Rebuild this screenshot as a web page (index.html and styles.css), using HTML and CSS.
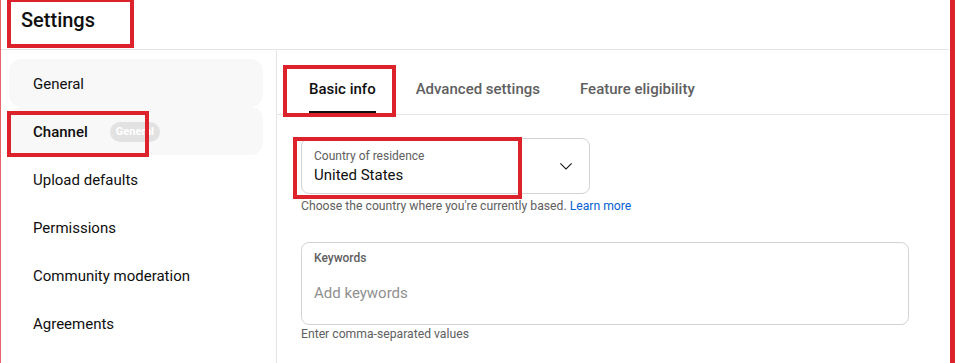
FILE: index.html
```html
<!DOCTYPE html>
<html lang="en">
<head>
    <meta charset="UTF-8">
    <meta name="viewport" content="width=device-width, initial-scale=1.0">
    <title>Settings</title>
    <link rel="stylesheet" href="styles.css">
</head>
<body>
    <div class="page">
        <header class="topbar">
            <h1>Settings</h1>
        </header>

        <div class="layout">
            <nav class="sidebar">
                <div class="nav-item hover">General</div>
                <div class="nav-item active">Channel <span class="badge">General</span></div>
                <div class="nav-item">Upload defaults</div>
                <div class="nav-item">Permissions</div>
                <div class="nav-item">Community moderation</div>
                <div class="nav-item">Agreements</div>
            </nav>

            <main class="content">
                <div class="tabs">
                    <div class="tab active">Basic info</div>
                    <div class="tab">Advanced settings</div>
                    <div class="tab">Feature eligibility</div>
                </div>

                <div class="form">
                    <div class="select">
                        <div class="select-text">
                            <div class="field-label">Country of residence</div>
                            <div class="select-value">United States</div>
                        </div>
                        <svg class="chevron" viewBox="0 0 24 24" width="24" height="24">
                            <path d="M18 9.71l-6 6-6-6 .71-.71L12 14.29l5.29-5.3.71.72z" fill="#0f0f0f"/>
                        </svg>
                    </div>
                    <p class="hint">Choose the country where you're currently based. <a href="#">Learn more</a></p>

                    <div class="textbox">
                        <div class="field-label">Keywords</div>
                        <div class="placeholder">Add keywords</div>
                    </div>
                    <p class="hint tight">Enter comma-separated values</p>
                </div>
            </main>
        </div>

        <!-- annotation marks drawn over the screenshot -->
        <div class="mark mark-settings"></div>
        <div class="mark mark-channel"></div>
        <div class="mark mark-tab"></div>
        <div class="mark mark-country"></div>
        <div class="edge edge-left"></div>
        <div class="edge edge-right"></div>
    </div>
</body>
</html>
```

FILE: styles.css
```css
body {
    margin: 0;
    font-family: Roboto, 'Noto Sans', sans-serif;
    color: #0f0f0f;
    background: #fff;
}
.page {
    position: relative;
    width: 957px;
    height: 363px;
    overflow: hidden;
}
.topbar {
    height: 49px;
    display: flex;
    align-items: center;
    padding-left: 21px;
    border-bottom: 1px solid #e5e5e5;
    margin-right: 8px;
}
.topbar h1 {
    margin: 0;
    font-size: 20px;
    font-weight: 500;
    position: relative;
    top: -5px;
}
.layout {
    display: grid;
    grid-template-columns: 277px 1fr;
    height: 313px;
    margin-right: 8px;
}
.sidebar {
    border-right: 1px solid #e5e5e5;
    padding: 9px 13px 0 9px;
}
.nav-item {
    height: 48px;
    display: flex;
    align-items: center;
    padding-left: 24px;
    padding-top: 2px;
    box-sizing: border-box;
    font-size: 15px;
    border-radius: 12px;
}
.nav-item.hover,
.nav-item.active {
    background: #f8f8f8;
}
.nav-item.active {
    font-weight: 500;
}
.badge {
    margin-left: 22px;
    height: 20px;
    padding: 0 6px;
    border-radius: 10px;
    background: #e2e2e2;
    color: #fff;
    font-size: 11px;
    font-weight: 700;
    line-height: 20px;
}
.tabs {
    display: flex;
    align-items: flex-end;
    gap: 40px;
    height: 64px;
    padding-left: 32px;
    border-bottom: 1px solid #e5e5e5;
}
.tab {
    font-size: 15px;
    font-weight: 500;
    color: #606060;
    line-height: 24px;
    padding-bottom: 10px;
    border-bottom: 3px solid transparent;
}
.tab.active {
    color: #0f0f0f;
    border-bottom-color: #0f0f0f;
}
.form {
    padding: 23px 24px 0 24px;
}
.select {
    height: 54px;
    border: 1px solid #d3d3d3;
    border-radius: 8px;
    display: flex;
    align-items: center;
    justify-content: space-between;
    padding: 0 11px 0 12px;
    width: 264px;
}
.select-text {
    padding-top: 1px;
}
.field-label {
    font-size: 12px;
    line-height: 16px;
    color: #606060;
}
.select-value {
    font-size: 15px;
    line-height: 22px;
}
.chevron {
    display: block;
}
.hint {
    margin: 4px 0 0;
    font-size: 12.2px;
    line-height: 16px;
    color: #606060;
}
.hint a {
    color: #065fd4;
    text-decoration: none;
}
.textbox {
    margin-top: 28px;
    width: 582px;
    height: 67px;
    border: 1px solid #d3d3d3;
    border-radius: 8px;
    padding: 7px 12px 7px 12px;
}
.textbox .field-label {
    font-weight: 500;
}
.placeholder {
    margin-top: 15px;
    font-size: 15px;
    line-height: 24px;
    color: #909090;
}
.hint.tight {
    margin-top: 1px;
}
.mark {
    position: absolute;
    border: 4px solid #dc222b;
    box-sizing: border-box;
}
.mark-settings {
    left: 7px;
    top: -2px;
    width: 127px;
    height: 50px;
}
.mark-channel {
    left: 7px;
    top: 111px;
    width: 142px;
    height: 46px;
}
.mark-tab {
    left: 283px;
    top: 65px;
    width: 113px;
    height: 52px;
}
.mark-country {
    left: 293px;
    top: 137px;
    width: 229px;
    height: 62px;
}
.edge {
    position: absolute;
    top: 0;
    bottom: 0;
    background: #dc222b;
}
.edge-left {
    left: 0;
    width: 1px;
    opacity: 0.7;
}
.edge-right {
    left: 950px;
    width: 5px;
}
```
